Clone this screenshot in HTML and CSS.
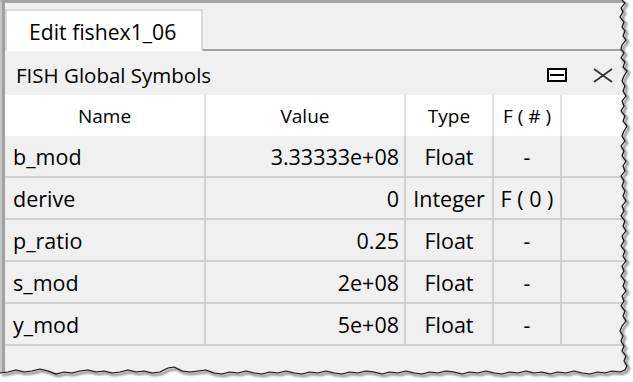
FILE: index.html
```html
<!DOCTYPE html>
<html lang="en">
<head>
  <meta charset="UTF-8" />
  <title>FISH Global Symbols</title>
  <link rel="stylesheet" href="styles.css">
</head>
<body>

  <div class="shot">
    <div class="window">
      <div class="tabbar">
        <div class="tab">Edit fishex1_06</div>
        <div class="tab-rest"></div>
      </div>

      <div class="panel-head">
        <span class="panel-title">FISH Global Symbols</span>
        <span class="panel-tools">
          <svg class="float-btn" width="20" height="14" viewBox="0 0 20 14">
            <rect x="1" y="1" width="18" height="12" fill="#fff" stroke="#000" stroke-width="2" />
            <line x1="3" y1="7" x2="17" y2="7" stroke="#000" stroke-width="2" />
          </svg>
          <svg class="close-btn" width="20" height="15" viewBox="0 0 20 15">
            <line x1="1" y1="1" x2="19" y2="14" stroke="#333" stroke-width="1.8" />
            <line x1="1" y1="14" x2="19" y2="1" stroke="#333" stroke-width="1.8" />
          </svg>
        </span>
      </div>

      <div class="symbols">
        <div class="hd">Name</div>
        <div class="hd">Value</div>
        <div class="hd">Type</div>
        <div class="hd">F ( # )</div>
        <div class="hd last"></div>

        <div class="cell name">b_mod</div>
        <div class="cell num">3.33333e+08</div>
        <div class="cell mid">Float</div>
        <div class="cell mid">-</div>
        <div class="cell last"></div>

        <div class="cell name">derive</div>
        <div class="cell num">0</div>
        <div class="cell mid">Integer</div>
        <div class="cell mid">F ( 0 )</div>
        <div class="cell last"></div>

        <div class="cell name">p_ratio</div>
        <div class="cell num">0.25</div>
        <div class="cell mid">Float</div>
        <div class="cell mid">-</div>
        <div class="cell last"></div>

        <div class="cell name">s_mod</div>
        <div class="cell num">2e+08</div>
        <div class="cell mid">Float</div>
        <div class="cell mid">-</div>
        <div class="cell last"></div>

        <div class="cell name">y_mod</div>
        <div class="cell num">5e+08</div>
        <div class="cell mid">Float</div>
        <div class="cell mid">-</div>
        <div class="cell last"></div>
      </div>
    </div>

    <!-- torn paper edge over the screenshot -->
    <svg class="torn" width="633" height="382" viewBox="0 0 633 382">
      <defs>
        <filter id="soft" x="-5%" y="-5%" width="110%" height="110%">
          <feGaussianBlur stdDeviation="1.2" />
        </filter>
      </defs>
      <path fill="#fff" fill-rule="evenodd" d="M0 0 H633 V382 H0 Z
        M0 0 L622 0 L625 3 L621 8 L623 12 L620 17 L624 22 L622 27 L625 31 L623 36 L626 40 L622 45 L621 49 L624 53 L621 58 L625 62 L623 67 L627 71 L624 76 L622 81 L625 86 L623 91 L626 96 L622 101 L624 106 L621 111 L625 116 L623 121 L627 126 L624 131 L622 136 L625 141 L621 146 L624 151 L622 156 L626 161 L623 166 L625 171 L621 176 L624 181 L622 186 L625 191 L623 196 L626 201 L622 206 L624 211 L621 216 L625 221 L623 226 L626 231 L622 236 L624 241 L621 246 L625 251 L623 256 L626 261 L622 266 L624 271 L621 276 L625 281 L623 286 L626 291 L622 296 L624 301 L621 306 L625 311 L623 316 L626 321 L622 326 L620 331 L623 336 L621 341 L624 346 L622 351 L626 356 L624 361 L627 366 L625 370
        L620 372 L612 371 L605 373 L598 372 L590 374 L582 373 L574 371 L566 373 L558 372 L550 374 L542 372 L534 373 L526 371 L518 373 L510 372 L502 374 L494 373 L486 371 L478 373 L470 372 L462 374 L454 372 L446 371 L438 373 L430 372 L422 374 L414 373 L406 371 L398 373 L390 372 L382 374 L374 372 L366 371 L358 373 L350 372 L342 374 L334 373 L326 371 L318 373 L310 372 L302 374 L294 373 L286 371 L278 373 L270 372 L262 374 L254 373 L246 371 L238 373 L230 372 L222 374 L214 373 L206 370 L198 371 L190 372 L182 371 L174 367 L168 368 L160 372 L152 373 L144 371 L136 372 L128 370 L120 372 L112 373 L104 371 L96 372 L88 370 L80 371 L72 373 L64 372 L56 374 L48 371 L40 369 L32 371 L24 372 L16 370 L8 372 L0 373 Z" />
      <polyline class="edge-shadow" filter="url(#soft)" transform="translate(2 2)" points="622,0 625,3 621,8 623,12 620,17 624,22 622,27 625,31 623,36 626,40 622,45 621,49 624,53 621,58 625,62 623,67 627,71 624,76 622,81 625,86 623,91 626,96 622,101 624,106 621,111 625,116 623,121 627,126 624,131 622,136 625,141 621,146 624,151 622,156 626,161 623,166 625,171 621,176 624,181 622,186 625,191 623,196 626,201 622,206 624,211 621,216 625,221 623,226 626,231 622,236 624,241 621,246 625,251 623,256 626,261 622,266 624,271 621,276 625,281 623,286 626,291 622,296 624,301 621,306 625,311 623,316 626,321 622,326 620,331 623,336 621,341 624,346 622,351 626,356 624,361 627,366 625,370 620,372 612,371 605,373 598,372 590,374 582,373 574,371 566,373 558,372 550,374 542,372 534,373 526,371 518,373 510,372 502,374 494,373 486,371 478,373 470,372 462,374 454,372 446,371 438,373 430,372 422,374 414,373 406,371 398,373 390,372 382,374 374,372 366,371 358,373 350,372 342,374 334,373 326,371 318,373 310,372 302,374 294,373 286,371 278,373 270,372 262,374 254,373 246,371 238,373 230,372 222,374 214,373 206,370 198,371 190,372 182,371 174,367 168,368 160,372 152,373 144,371 136,372 128,370 120,372 112,373 104,371 96,372 88,370 80,371 72,373 64,372 56,374 48,371 40,369 32,371 24,372 16,370 8,372 0,373" />
      <polyline class="edge" points="622,0 625,3 621,8 623,12 620,17 624,22 622,27 625,31 623,36 626,40 622,45 621,49 624,53 621,58 625,62 623,67 627,71 624,76 622,81 625,86 623,91 626,96 622,101 624,106 621,111 625,116 623,121 627,126 624,131 622,136 625,141 621,146 624,151 622,156 626,161 623,166 625,171 621,176 624,181 622,186 625,191 623,196 626,201 622,206 624,211 621,216 625,221 623,226 626,231 622,236 624,241 621,246 625,251 623,256 626,261 622,266 624,271 621,276 625,281 623,286 626,291 622,296 624,301 621,306 625,311 623,316 626,321 622,326 620,331 623,336 621,341 624,346 622,351 626,356 624,361 627,366 625,370 620,372 612,371 605,373 598,372 590,374 582,373 574,371 566,373 558,372 550,374 542,372 534,373 526,371 518,373 510,372 502,374 494,373 486,371 478,373 470,372 462,374 454,372 446,371 438,373 430,372 422,374 414,373 406,371 398,373 390,372 382,374 374,372 366,371 358,373 350,372 342,374 334,373 326,371 318,373 310,372 302,374 294,373 286,371 278,373 270,372 262,374 254,373 246,371 238,373 230,372 222,374 214,373 206,370 198,371 190,372 182,371 174,367 168,368 160,372 152,373 144,371 136,372 128,370 120,372 112,373 104,371 96,372 88,370 80,371 72,373 64,372 56,374 48,371 40,369 32,371 24,372 16,370 8,372 0,373" />
    </svg>
  </div>

</body>
</html>
```

FILE: styles.css
```css
* {
  margin: 0;
  padding: 0;
  box-sizing: border-box;
}

body {
  background: #fff;
  font-family: "Open Sans", "Noto Sans", sans-serif;
  color: #000;
  overflow: hidden;
}

.shot {
  position: relative;
  width: 633px;
  height: 382px;
}

.window {
  width: 100%;
  height: 100%;
  background: #f0f0f0;
  border-top: 3px solid #a3a3a3;
  border-left: 2px solid #c6c6c6;
  box-shadow: inset 3px 0 0 #a0a0a0;
  padding-left: 3px;
  overflow: hidden;
}

.tabbar {
  display: flex;
  align-items: flex-end;
  height: 48px;
}

.tab {
  width: 198px;
  height: 42px;
  padding-left: 22px;
  display: flex;
  align-items: center;
  background: #fff;
  border: 2px solid #d9d9d9;
  border-bottom: none;
  font-size: 21.2px;
  white-space: nowrap;
}

.tab-rest {
  flex: 1;
  border-bottom: 2px solid #a0a0a0;
}

.panel-head {
  height: 44px;
  display: flex;
  align-items: center;
  padding: 4px 20px 0 11px;
}

.panel-title {
  font-size: 20.5px;
}

.panel-tools {
  margin-left: auto;
  display: flex;
  align-items: center;
  gap: 26px;
}

.symbols {
  display: grid;
  grid-template-columns: 201px 200px 88px 68px 1fr;
}

.hd {
  height: 41px;
  display: flex;
  align-items: center;
  justify-content: center;
  background: #fff;
  border-right: 2px solid #e3e3e3;
  font-size: 19px;
  white-space: nowrap;
}

.cell {
  height: 42px;
  display: flex;
  align-items: center;
  border-right: 2px solid #d0d0d0;
  border-bottom: 2px solid #d0d0d0;
  font-size: 21.5px;
  white-space: nowrap;
}

.hd.last,
.cell.last {
  border-right: none;
}

.cell.name {
  padding-left: 8px;
}

.cell.num {
  justify-content: flex-end;
  padding-right: 5px;
}

.cell.mid {
  justify-content: center;
}

.torn {
  position: absolute;
  top: 0;
  left: 0;
}

.edge-shadow {
  fill: none;
  stroke: #8a8a8a;
  stroke-width: 2.5;
}

.edge {
  fill: none;
  stroke: #111;
  stroke-width: 1.2;
}
```
